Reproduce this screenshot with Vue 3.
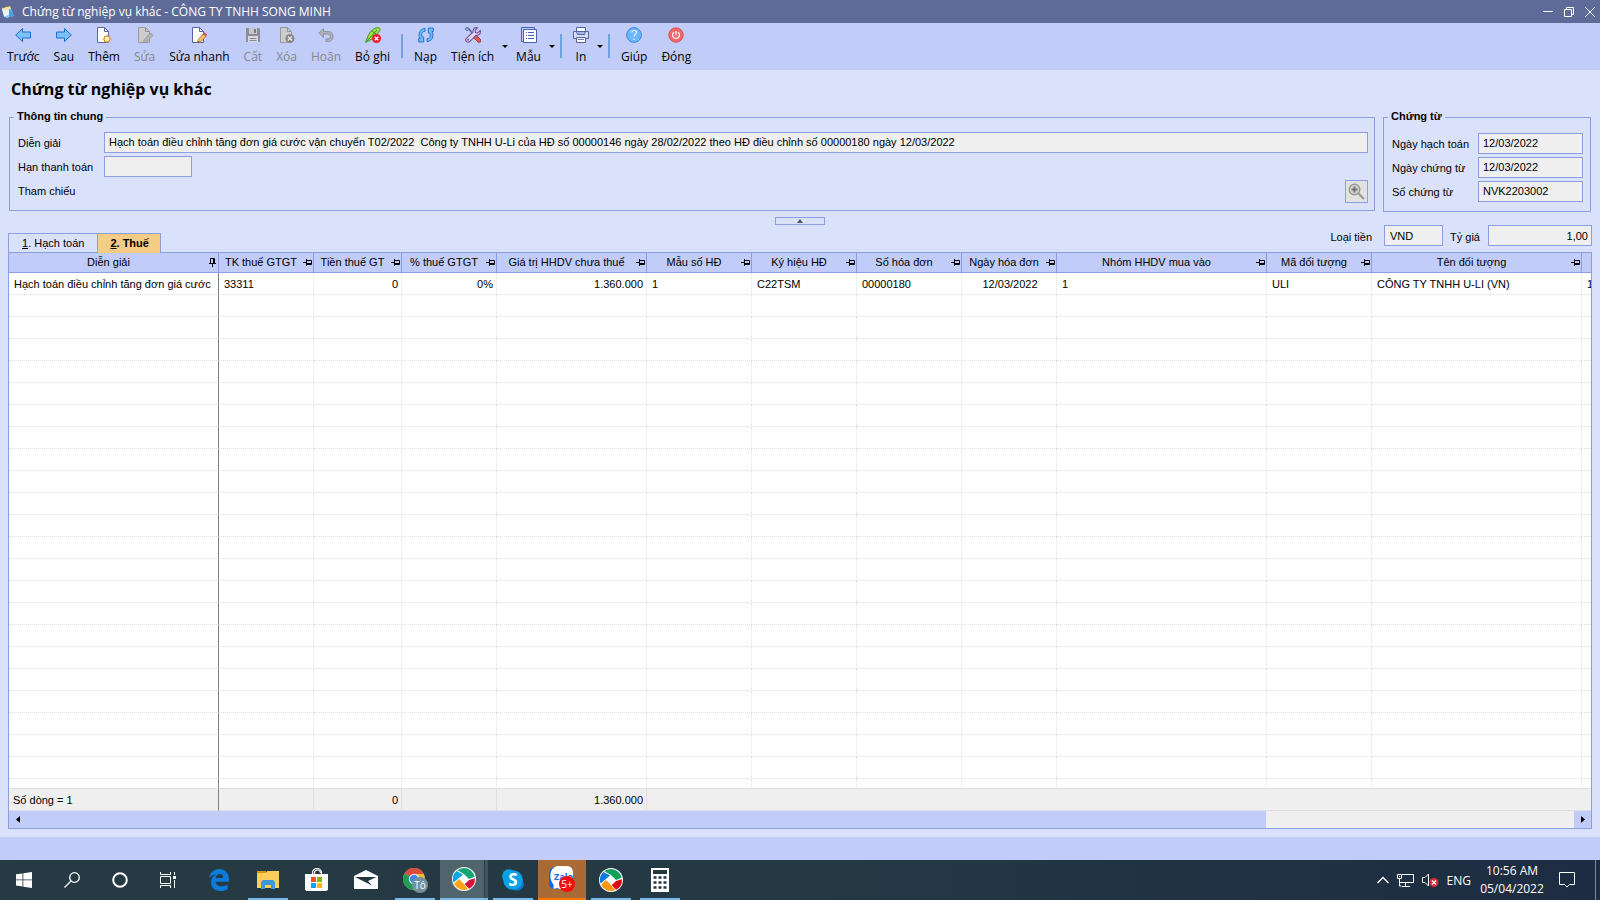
<script setup>
import { ref } from 'vue'

const tools = [
  { icon: 'prev', label: 'Trước' },
  { icon: 'next', label: 'Sau' },
  { icon: 'add', label: 'Thêm' },
  { icon: 'edit', label: 'Sửa', off: true },
  { icon: 'quick', label: 'Sửa nhanh' },
  { icon: 'save', label: 'Cất', off: true },
  { icon: 'del', label: 'Xóa', off: true },
  { icon: 'undo', label: 'Hoãn', off: true },
  { icon: 'unpost', label: 'Bỏ ghi', sep: true },
  { icon: 'reload', label: 'Nạp' },
  { icon: 'util', label: 'Tiện ích', menu: true },
  { icon: 'form', label: 'Mẫu', menu: true, sep: true },
  { icon: 'print', label: 'In', menu: true, sep: true },
  { icon: 'help', label: 'Giúp' },
  { icon: 'close', label: 'Đóng' }
]

const columns = [
  { title: 'Diễn giải', width: 210, value: 'Hạch toán điều chỉnh tăng đơn giá cước', pinned: true },
  { title: 'TK thuế GTGT', width: 95, value: '33311' },
  { title: 'Tiền thuế GT', width: 88, value: '0', align: 'right', total: '0' },
  { title: '% thuế GTGT', width: 95, value: '0%', align: 'right' },
  { title: 'Giá trị HHDV chưa thuế', width: 150, value: '1.360.000', align: 'right', total: '1.360.000' },
  { title: 'Mẫu số HĐ', width: 105, value: '1' },
  { title: 'Ký hiệu HĐ', width: 105, value: 'C22TSM' },
  { title: 'Số hóa đơn', width: 105, value: '00000180' },
  { title: 'Ngày hóa đơn', width: 95, value: '12/03/2022', align: 'center' },
  { title: 'Nhóm HHDV mua vào', width: 210, value: '1' },
  { title: 'Mã đối tượng', width: 105, value: 'ULI' },
  { title: 'Tên đối tượng', width: 210, value: 'CÔNG TY TNHH U-LI (VN)' },
  { title: '', width: 0, value: '1' }
]

const voucher = [
  { id: 'posted', label: 'Ngày hạch toán', value: '12/03/2022' },
  { id: 'dated', label: 'Ngày chứng từ', value: '12/03/2022' },
  { id: 'number', label: 'Số chứng từ', value: 'NVK2203002' }
]

const description = ref('Hạch toán điều chỉnh tăng đơn giá cước vận chuyển T02/2022  Công ty TNHH U-Li của HĐ số 00000146 ngày 28/02/2022 theo HĐ điều chỉnh số 00000180 ngày 12/03/2022')
const due = ref('')
const currency = ref('VND')
const rate = ref('1,00')
const emptyRows = 23
</script>

<template>
  <div class="screen">
    <header class="titlebar">
      <svg class="app-icon" width="14" height="14" viewBox="0 0 14 14">
        <path d="M1 4 9 2 13 11 5 13z" fill="#8fd0f5" />
        <path d="M1 4 7 2 9 9 3 12z" fill="#e9f6ff" />
        <path d="M8 3 13 11 8 12z" fill="#3f9fe0" />
        <path d="M1 3 9 1 10 4 2 5z" fill="#f2df9a" />
        <path d="M3 1v2M7 0v2" stroke="#6d5a35" />
      </svg>
      <span class="caption">Chứng từ nghiệp vụ khác - CÔNG TY TNHH SONG MINH</span>
      <button class="win" aria-label="Minimize"><svg width="12" height="12" viewBox="0 0 12 12"><path d="M1 5.500h10" stroke="#fff" /></svg></button>
      <button class="win" aria-label="Restore"><svg width="12" height="12" viewBox="0 0 12 12" fill="none" stroke="#fff"><path d="M1.500 3.500h7v7h-7zM3.500 3V1.500h7v7H9" /></svg></button>
      <button class="win" aria-label="Close"><svg width="12" height="12" viewBox="0 0 12 12"><path d="M1 1l10 10M11 1 1 11" stroke="#fff" /></svg></button>
    </header>

    <nav class="toolbar">
      <template v-for="t in tools" :key="t.icon">
        <button class="tool" :class="{ off: t.off }" :disabled="t.off">
          <svg width="16" height="16" viewBox="0 0 16 16" fill="none">
            <path v-if="t.icon === 'prev'" d="M.7 8 7.500 1.500V5h8v6h-8v3.500z" fill="#7cc0fb" stroke="#1a6fd0" />
            <path v-else-if="t.icon === 'next'" d="M15.300 8 8.500 1.500V5h-8v6h8v3.500z" fill="#7cc0fb" stroke="#1a6fd0" />
            <g v-else-if="t.icon === 'add'">
              <path d="M1.500.5h7l4 4v11h-11z" fill="#fff" stroke="#5a68a8" /><path d="M8.500.5v4h4" stroke="#5a68a8" />
              <path d="M11 7.500v9M6.500 12h9M8 9l6 6M14 9l-6 6" stroke="#dba13a" /><circle cx="11" cy="12" r="3" fill="#fff0a8" stroke="#cf922c" />
            </g>
            <g v-else-if="t.icon === 'edit'">
              <path d="M1.500.5h7l4 4v11h-11z" fill="#ccc" stroke="#9a9ba0" /><path d="M8.500.5v4h4" stroke="#929398" />
              <path d="M13.500 6 16 8.500 9.500 15 6.500 16 7 13z" fill="#b5b5b8" stroke="#8c8c92" stroke-width=".8" />
            </g>
            <g v-else-if="t.icon === 'quick'">
              <path d="M1.500.5h7l4 4v11h-11z" fill="#fff" stroke="#5265ad" /><path d="M8.500.5v4h4" stroke="#5265ad" />
              <path d="M12 7 15 9.500 9.500 15 6.500 16 7 13z" fill="#f1c173" stroke="#a56a2c" stroke-width=".8" /><path d="M13 6l2.500 2.500" stroke="#d65454" stroke-width="2" /><path d="M6.500 16l1-2 1 1z" fill="#333" />
            </g>
            <g v-else-if="t.icon === 'save'">
              <path d="M1 1h13l1 1v13H1z" fill="#8b8e98" /><path d="M4 1h8v6H4z" fill="#c6c8ce" /><path d="M9 2h2v4H9z" fill="#777b85" /><path d="M3 9h10v6H3z" fill="#d9dbe0" /><path d="M4.500 11.500h7M4.500 13.500h7" stroke="#868993" />
            </g>
            <g v-else-if="t.icon === 'del'">
              <path d="M1.500.5h7l4 4v11h-11z" fill="#ccc" stroke="#97989e" /><path d="M8.500.5v4h4" stroke="#929398" />
              <circle cx="11" cy="11.500" r="4.500" fill="#85868c" /><path d="M9 9.500l4 4M13 9.500l-4 4" stroke="#e5e5e8" stroke-width="1.500" />
            </g>
            <path v-else-if="t.icon === 'undo'" d="M.8 6 5.500 1.500V4.500h5a4.600 5 0 0 1 0 10H8v-2.500h2a2.500 2.500 0 0 0 0-5H5.500v3.500z" fill="#adb0bc" stroke="#8a8d9c" stroke-width=".9" />
            <g v-else-if="t.icon === 'unpost'">
              <path d="M.5 15.500 3 9C5 4 9 1 12.500.7c3 0 3.500 1.800 1.500 4L7 12z" fill="#9de053" stroke="#3d9720" /><path d="M2 14 12 3M7 4l4 3" stroke="#3d9720" />
              <circle cx="11.500" cy="11.500" r="4.500" fill="#ed1c24" /><path d="M9.700 9.700l3.600 3.600M13.300 9.700l-3.600 3.600" stroke="#fff" stroke-width="1.400" />
            </g>
            <g v-else-if="t.icon === 'reload'" fill="#70bafa" stroke="#1c6dcb" stroke-width=".9">
              <path d="M7 1.500C2 1.500-.5 7 2 11.500H.7v3.500h5v-5L4.500 10C2.700 7.500 4 4.500 7 4.200z" />
              <path d="M9 14.500c5 0 7.500-5.500 5-10h1.300V1h-5v5l1.200 0c1.800 2.500.5 5.500-2.500 5.800z" />
            </g>
            <g v-else-if="t.icon === 'util'">
              <path d="M1 1l2.500.5L9 8" stroke="#53659f" stroke-width="1.500" /><circle cx="2" cy="2" r="1.500" fill="#a9b9e4" stroke="#53659f" stroke-width=".8" />
              <path d="M9 9l2-1 5 5c.5 1.500-1 3-2.500 2.500L9 11z" fill="#e05a4c" stroke="#9a3434" stroke-width=".9" />
              <path d="M15.300 3.500 12.500 6 10.500 5.500 10 3.500 12.500.8C10 0 7.500 2 8 5L1.200 11.500c-1.500 2 1 4.800 3.300 3.300L11 8.300c3 .5 5-2 4.300-4.800z" fill="#ded5ef" stroke="#76519f" stroke-width="1.100" /><circle cx="3.200" cy="12.800" r="1" fill="#76519f" />
            </g>
            <g v-else-if="t.icon === 'form'">
              <path d="M.5 14.500V.5h13v2M.5 14.500h2" stroke="#4762b3" /><path d="M2.500 2.500h13v13h-13z" fill="#fff" stroke="#4762b3" />
              <path d="M5 5.500h1M7 5.500h6M5 8.500h1M7 8.500h6M5 11.500h1M7 11.500h6" stroke="#4762b3" />
            </g>
            <g v-else-if="t.icon === 'print'">
              <path d="M3.500 4.500v-4h9v4" fill="#fff" stroke="#56669b" /><path d="M.5 4.500h15v7H.5z" fill="#d3def9" stroke="#56669b" /><path d="M3.500 4.500h9l-1 3h-7z" fill="#a5b8e5" stroke="#56669b" /><path d="M3.500 10.500h9v5h-9z" fill="#fff" stroke="#56669b" /><path d="M5 12.500h6" stroke="#7180b0" />
            </g>
            <g v-else-if="t.icon === 'help'">
              <circle cx="8" cy="8" r="7.400" fill="#6cb5ff" stroke="#3789dc" /><path d="M5.800 5.500c.2-2.800 4.700-2.500 4.600 0 0 1.700-2.300 2-2.300 4M8 11.500v1.500" stroke="#f1f8ff" stroke-width="1.200" />
            </g>
            <g v-else>
              <circle cx="8" cy="8" r="7.200" fill="#f46868" stroke="#d74e50" /><path d="M6 5.300a3.400 3.400 0 1 0 4 0M8 4v4" stroke="#fff" stroke-width="1.200" />
            </g>
          </svg>
          <span>{{ t.label }}</span>
        </button>
        <button v-if="t.menu" class="caret" :aria-label="t.label + ' menu'"><svg width="6" height="3" viewBox="0 0 6 3"><path d="M0 0h6L3 3z" /></svg></button>
        <i v-if="t.sep" class="sep"></i>
      </template>
    </nav>

    <main class="page">
      <h1>Chứng từ nghiệp vụ khác</h1>

      <div class="groups">
        <fieldset class="general">
          <legend>Thông tin chung</legend>
          <div class="line"><label for="desc">Diễn giải</label><input id="desc" v-model="description" class="grow" readonly></div>
          <div class="line"><label for="due">Hạn thanh toán</label><input id="due" v-model="due" class="short" readonly></div>
          <div class="line">
            <span class="grow">Tham chiếu</span>
            <button class="lookup" aria-label="Chọn tham chiếu">
              <svg width="17" height="17" viewBox="0 0 17 17" fill="none"><circle cx="6.500" cy="6.500" r="5.300" fill="#d2d2d2" stroke="#999" stroke-width="1.400" /><path d="M6.500 3.500v6M3.500 6.500h6" stroke="#777" stroke-width="2" /><path d="M10.500 10.500l5.500 5.500" stroke="#999" stroke-width="2.200" /></svg>
            </button>
          </div>
        </fieldset>
        <fieldset class="voucher">
          <legend>Chứng từ</legend>
          <div v-for="v in voucher" :key="v.id" class="line"><label :for="v.id">{{ v.label }}</label><input :id="v.id" :value="v.value" class="grow" readonly></div>
        </fieldset>
      </div>

      <button class="fold" aria-label="Thu gọn"><svg width="6" height="4" viewBox="0 0 6 4"><path d="M0 4h6L3 0z" fill="#555" /></svg></button>

      <div class="strip">
        <div class="tabs" role="tablist">
          <button class="tab" role="tab" aria-selected="false"><u>1</u>. Hạch toán</button>
          <button class="tab on" role="tab" aria-selected="true"><u>2</u>. Thuế</button>
        </div>
        <div class="money">
          <label for="cur">Loại tiền</label><input id="cur" v-model="currency" class="cur" readonly>
          <label for="rate" class="rate-label">Tỷ giá</label><input id="rate" v-model="rate" class="rate" readonly>
        </div>
      </div>

      <section class="grid">
        <div class="rows">
          <table>
            <colgroup><col v-for="(c, i) in columns" :key="i" :style="c.width ? { width: c.width + 'px' } : null"></colgroup>
            <thead>
              <tr>
                <th v-for="(c, i) in columns" :key="i">
                  <div v-if="c.title" class="head">
                    <span>{{ c.title }}</span>
                    <svg v-if="c.pinned" width="9" height="9" viewBox="0 0 9 9" fill="none" stroke="#000"><path d="M2.500 5V.5h4V5M5.500 1v4M1 5.500h7M4.500 6v3" /></svg>
                    <svg v-else width="9" height="9" viewBox="0 0 9 9" fill="none" stroke="#000"><path d="M0 4.500h3M3.500 1v7M4 2.500h4.500v4H4M4 5.500h4" /></svg>
                  </div>
                </th>
              </tr>
            </thead>
            <tbody>
              <tr><td v-for="(c, i) in columns" :key="i" :class="c.align">{{ c.value }}</td></tr>
              <tr v-for="n in emptyRows" :key="n"><td v-for="(c, i) in columns" :key="i"></td></tr>
            </tbody>
          </table>
        </div>
        <table class="totals">
          <colgroup><col v-for="(c, i) in columns" :key="i" :style="c.width ? { width: c.width + 'px' } : null"></colgroup>
          <tbody><tr><td v-for="(c, i) in columns" :key="i" :class="c.align">{{ i ? c.total : 'Số dòng = 1' }}</td></tr></tbody>
        </table>
        <div class="hscroll">
          <button class="arrow" aria-label="Cuộn trái"><svg width="4" height="7" viewBox="0 0 4 7"><path d="M4 0v7L0 3.500z" /></svg></button>
          <div class="track"><div class="thumb"></div></div>
          <button class="arrow" aria-label="Cuộn phải"><svg width="4" height="7" viewBox="0 0 4 7"><path d="M0 0v7l4-3.500z" /></svg></button>
        </div>
      </section>
    </main>

    <div class="status"></div>

    <footer class="taskbar">
      <button class="sys" aria-label="Start"><svg width="16" height="16" viewBox="0 0 16 16" fill="#fff"><path d="M0 2.300 6.500 1.400V7.500H0zM7.300 1.300 16 0v7.500H7.300zM0 8.300h6.500v6.200L0 13.600zM7.300 8.300H16V16l-8.700-1.300z" /></svg></button>
      <button class="sys" aria-label="Search"><svg width="16" height="16" viewBox="0 0 16 16" fill="none" stroke="#fff" stroke-width="1.300"><circle cx="10.500" cy="5.500" r="4.800" /><path d="M7 9 .5 15.500" /></svg></button>
      <button class="sys" aria-label="Cortana"><svg width="16" height="16" viewBox="0 0 16 16" fill="none" stroke="#fff" stroke-width="2"><circle cx="8" cy="8" r="6.800" /></svg></button>
      <button class="sys" aria-label="Task view"><svg width="16" height="16" viewBox="0 0 16 16" fill="none" stroke="#fff"><path d="M.5 0v2.500h10V0M.5 16v-2.500h10V16M.5 4.500h10v7H.5zM14.500 0v3M14.500 8v8" /><path d="M13 4h3v3h-3z" fill="#fff" stroke="none" /></svg></button>

      <div class="apps">
        <button class="app" aria-label="Edge"><svg width="22" height="24" viewBox="0 0 22 24"><path d="M1 10.500C2 4.500 6 1 11.300 1 17.500 1 21 5.500 21 11v2.700H7.600c.2 3 2.700 4.500 6 4.500 2.300 0 4.300-.6 6-1.600v4.600C17.600 22.500 15 23 12.300 23 6.800 23 3 19.700 3 14.500c0-3.800 2-6.500 5-8-3.500.3-5.500 1.800-7 4zM7.700 10h7.500c0-2.400-1-4-3.500-4-2.200 0-3.700 1.700-4 4z" fill="#0b7bdc" /></svg></button>
        <button class="app open" aria-label="File Explorer"><svg width="22" height="20" viewBox="0 0 22 20"><path d="M0 1h9l1 2H0z" fill="#e59c13" /><path d="M0 3h9l1.500-2H22v17H0z" fill="#fbcf5a" /><path d="M0 1h8v2H0z" fill="#dd950e" /><path d="M4 19v-7l2-2h10l2 2v7h-4v-4H8v4z" fill="#3a97dd" /></svg></button>
        <button class="app" aria-label="Store"><svg width="24" height="24" viewBox="0 0 24 24"><path d="M7.500 7V4.500a4.500 4 0 0 1 9 0V7M9.500 7V5a3 3 0 0 1 6 0" fill="none" stroke="#fff" stroke-width="1.200" /><path d="M0 6h23v15.500l-1.500 1.500H1.500L0 21.500z" fill="#fff" /><path d="M6 9h5v5H6z" fill="#f25022" /><path d="M12 9h5v5h-5z" fill="#7fba00" /><path d="M6 15h5v5H6z" fill="#00a4ef" /><path d="M12 15h5v5h-5z" fill="#ffb900" /></svg></button>
        <button class="app" aria-label="Mail"><svg width="24" height="20" viewBox="0 0 24 20"><path d="M0 6 12 0l12 6v13H0z" fill="#fff" /><path d="M1 7h21.500L14 11l4 4.500z" fill="#24373f" /></svg></button>
        <button class="app open" aria-label="Chrome">
          <svg width="26" height="26" viewBox="0 0 26 26"><circle cx="12" cy="12" r="11" fill="#e8bd43" /><path d="M12 12 2.500 6.500A11 11 0 0 1 21.800 7H12z" fill="#da4c3e" /><path d="M12 12 2.500 6.500A11 11 0 0 0 11 23l5-9z" fill="#1e9d5b" /><circle cx="12" cy="12" r="5.200" fill="#f1f1f1" /><circle cx="12" cy="12" r="4.200" fill="#4386f0" /><circle cx="18" cy="18" r="8" fill="#73909d" /><text x="18" y="22" fill="#fff" font-size="10" text-anchor="middle">Tô</text></svg>
        </button>
        <button class="app current" aria-label="AMIS">
          <svg width="24" height="24" viewBox="0 0 24 24"><circle cx="12" cy="12" r="12" fill="#fff" /><path d="M5.300 3.300A11 11 0 0 1 22.700 9.800L17 12 12 7z" fill="#12a573" /><path d="M22.900 11.200A11 11 0 0 1 17 21.800L12.700 17.300 17 13z" fill="#d3163c" /><path d="M16 22.300A11 11 0 0 1 2 16.700L7 12l5 5z" fill="#fba61a" /><path d="M1.500 15.600A11 11 0 0 1 4.500 4L11 7.500 7 11z" fill="#08a5e9" /></svg>
        </button>
        <button class="app open" aria-label="Skype"><svg width="22" height="22" viewBox="0 0 22 22"><circle cx="7" cy="7" r="6.800" fill="#0aa4e8" /><circle cx="15" cy="15" r="6.800" fill="#0a78d2" /><circle cx="11" cy="11" r="9.800" fill="#08a1e7" /><text x="11" y="17" fill="#fff" font-size="17" font-weight="bold" text-anchor="middle">S</text></svg></button>
        <button class="app alert" aria-label="Zalo"><svg width="26" height="26" viewBox="0 0 26 26"><rect width="22" height="22" y="1" rx="6" fill="#0b68f4" /><path d="M8 0h10c4 0 6 3 6 7v9c0 5-3 7-8 7-4 0-6 0-8-1-2 1-3 1-4 0 1-1 1-2 0-4C0 13 0 2 8 0z" fill="#fff" /><text x="5" y="14" fill="#1b6af0" font-size="9" font-weight="bold">Zalo</text><circle cx="18" cy="18" r="8" fill="#f60b13" /><text x="18" y="22" fill="#fff" font-size="10" text-anchor="middle">5+</text></svg></button>
        <button class="app open" aria-label="MISA">
          <svg width="24" height="24" viewBox="0 0 24 24"><circle cx="12" cy="12" r="12" fill="#fff" /><path d="M5.300 3.300A11 11 0 0 1 22.700 9.800L17 12 12 7z" fill="#12a05c" /><path d="M22.900 11.200A11 11 0 0 1 17 21.800L12.700 17.300 17 13z" fill="#dc0914" /><path d="M16 22.300A11 11 0 0 1 2 16.700L7 12l5 5z" fill="#ff9508" /><path d="M1.500 15.600A11 11 0 0 1 4.500 4L11 7.500 7 11z" fill="#0c7bd8" /></svg>
        </button>
        <button class="app open" aria-label="Calculator"><svg width="18" height="24" viewBox="0 0 18 24"><path d="M0 0h18v24H0z" fill="#fff" /><path d="M2 2h14v4H2z" fill="#24373f" /><path d="M2.500 9.500h3M7.500 9.500h3M12.500 9.500h3M2.500 14.500h3M7.500 14.500h3M12.500 14.500h3M2.500 19.500h3M7.500 19.500h3M12.500 19.500h3" stroke="#24373f" stroke-width="2.500" /></svg></button>
      </div>

      <div class="tray">
        <button aria-label="Show hidden icons"><svg width="12" height="8" viewBox="0 0 12 8" fill="none" stroke="#fff" stroke-width="1.300"><path d="M.5 7 6 1.500 11.500 7" /></svg></button>
        <button aria-label="Network"><svg width="17" height="14" viewBox="0 0 17 14" fill="none" stroke="#fff"><path d="M5 1.500h11.500v8H3M8.500 10v3M5 13.500h8M.5 1.500h4v4h-4zM2.500 6v7h2M2 3.500h1" /></svg></button>
        <button aria-label="Volume"><svg width="17" height="14" viewBox="0 0 17 14" fill="none"><path d="M.5 4.500v5H3l3.500 3.500V1L3 4.500z" stroke="#fff" /><circle cx="12" cy="9.500" r="4.500" fill="#de2b34" /><path d="M10 7.500l4 4M14 7.500l-4 4" stroke="#fff" stroke-width="1.300" /></svg></button>
        <button>ENG</button>
        <button class="clock"><time>10:56 AM</time><time>05/04/2022</time></button>
        <button aria-label="Notifications"><svg width="16" height="16" viewBox="0 0 16 16" fill="none" stroke="#fff"><path d="M.5.5h15v12h-5L8 15l-2.500-2.500h-5z" /></svg></button>
      </div>
      <button class="desk" aria-label="Show desktop"></button>
    </footer>
  </div>
</template>

<style>
body {
  margin: 0;
}
</style>

<style scoped>
.screen {
  --line: #8c9edf;
  --bar: #c1cdf8;
  --page: #dae1fb;
  --field: #efefef;
  --ui: "Open Sans", "Noto Sans", sans-serif;
  display: flex;
  flex-direction: column;
  height: 100vh;
  min-height: 480px;
  overflow: hidden;
  background: var(--page);
  color: #000;
  font-family: "Liberation Sans", sans-serif;
  font-size: 11px;
}

.screen * {
  box-sizing: border-box;
}

button,
input {
  margin: 0;
  padding: 0;
  border: 0;
  border-radius: 0;
  background: none;
  color: inherit;
  font: inherit;
}

button svg {
  display: block;
}

.titlebar {
  display: flex;
  align-items: center;
  flex: none;
  height: 23px;
  padding: 0 4px 0 1px;
  background: #5e6b98;
  color: #fff;
  font-family: var(--ui);
  font-size: 12px;
}

.caption {
  flex: 1;
  margin-left: 7px;
}

.win {
  display: grid;
  place-items: center;
  width: 12px;
  height: 22px;
  margin-left: 9px;
}

.toolbar {
  display: flex;
  align-items: flex-start;
  flex: none;
  height: 47px;
  background: var(--bar);
  font-family: var(--ui);
  font-size: 12px;
}

.tool {
  display: flex;
  flex-direction: column;
  align-items: center;
  height: 47px;
  padding: 4px 7px 0;
  line-height: 16px;
  white-space: nowrap;
}

.tool span {
  margin-top: 6px;
}

.off {
  color: #85868c;
}

.caret {
  height: 47px;
  width: 8px;
  padding: 0 1px;
}

.sep {
  width: 2px;
  height: 24px;
  margin: 11px 4px 0;
  background: #6fa3dc;
}

.page {
  display: flex;
  flex-direction: column;
  flex: 1;
  min-height: 0;
}

h1 {
  height: 40px;
  margin: 0;
  padding-left: 11px;
  font: bold 16px/38px var(--ui);
}

.groups {
  display: flex;
  align-items: flex-start;
  gap: 8px;
  padding: 0 9px;
}

fieldset {
  min-width: 0;
  margin: 0;
  border: 1px solid var(--line);
}

.general {
  flex: 1;
  padding: 8px 6px 6px 8px;
}

.voucher {
  width: 208px;
  padding: 9px 7px 6px 8px;
}

legend {
  margin-left: -4px;
  padding: 0 3px 2px;
  font-weight: bold;
  line-height: 12px;
}

.line {
  display: flex;
  height: 24px;
  line-height: 23px;
}

.line label {
  flex: none;
  width: 86px;
}

input {
  min-width: 0;
  height: 21px;
  padding: 0 4px;
  border: 1px solid var(--line);
  background: var(--field);
}

.grow {
  flex: 1;
}

.short {
  width: 88px;
}

.lookup {
  display: grid;
  place-items: center;
  width: 23px;
  height: 23px;
  border: 1px solid var(--line);
  background: #e2e2e2;
}

.fold {
  display: grid;
  place-items: center;
  flex: none;
  align-self: center;
  width: 50px;
  height: 8px;
  margin-top: 5px;
  border: 1px solid var(--line);
}

.strip {
  display: flex;
  justify-content: space-between;
  align-items: flex-end;
  flex: none;
  height: 27px;
  padding: 0 8px;
}

.tabs {
  display: flex;
}

.tab {
  height: 19px;
  padding: 0 13px;
  border: 1px solid var(--line);
  border-bottom: 0;
}

.on {
  z-index: 1;
  height: 20px;
  margin: 0 0 -1px -1px;
  padding: 0 11px 2px 12px;
  background: #f5cc85;
  font-weight: bold;
}

.money {
  display: flex;
  align-self: flex-start;
  line-height: 24px;
}

.cur {
  width: 59px;
  margin-left: 12px;
  padding-left: 5px;
}

.rate-label {
  width: 38px;
  margin-left: 7px;
}

.rate {
  width: 104px;
  padding-right: 3px;
  text-align: right;
}

.grid {
  display: flex;
  flex-direction: column;
  flex: 1;
  min-height: 0;
  margin: 0 8px 8px;
  border: 1px solid var(--line);
  background: #fff;
}

.rows {
  flex: 1;
  min-height: 0;
  overflow: hidden;
}

table {
  width: 100%;
  border-spacing: 0;
  table-layout: fixed;
}

th {
  height: 20px;
  padding: 0;
  border-right: 1px solid var(--line);
  border-bottom: 1px solid var(--line);
  background: var(--bar);
  font-weight: normal;
}

th:last-child {
  border-right: 0;
}

.head {
  display: flex;
  align-items: center;
  padding: 0 1px 1px 0;
}

.head span {
  flex: 1;
  overflow: hidden;
  text-align: center;
  white-space: nowrap;
}

td {
  height: 22px;
  padding: 0 3px 0 5px;
  overflow: hidden;
  border-right: 1px dotted #e0e0e0;
  border-bottom: 1px dotted #e0e0e0;
  white-space: nowrap;
}

td:first-child {
  border-right: 1px solid #808080;
}

td:last-child {
  border-right: 0;
}

.right {
  text-align: right;
}

.center {
  text-align: center;
}

.totals {
  flex: none;
  background: var(--field);
}

.totals td {
  height: 23px;
  border-top: 1px solid #dfdfdf;
  border-right-style: solid;
  border-bottom: 1px solid #dfdfdf;
}

.totals td:first-child {
  padding-left: 4px;
}

.totals td:nth-child(n+6) {
  border-right: 0;
}

.hscroll {
  display: flex;
  flex: none;
  height: 17px;
  background: var(--bar);
}

.arrow {
  display: grid;
  place-items: center;
  width: 17px;
}

.track {
  flex: 1;
  background: var(--field);
}

.thumb {
  width: 80.1%;
  height: 100%;
  background: var(--bar);
}

.status {
  flex: none;
  height: 23px;
  background: var(--bar);
}

.taskbar {
  display: flex;
  flex: none;
  height: 40px;
  background: linear-gradient(90deg, #253a42, #243944 50%, #1d2c42);
  color: #fff;
  font-family: var(--ui);
  font-size: 12px;
}

.sys,
.app {
  display: grid;
  place-items: center;
  width: 48px;
  height: 40px;
}

.apps {
  display: flex;
  gap: 1px;
  margin-left: 3px;
}

.open {
  background: linear-gradient(#76b9ed, #76b9ed) 50% 100% / 40px 2px no-repeat;
}

.current {
  border-bottom: 2px solid #76b9ed;
  background: linear-gradient(90deg, #4f646b 44px, #2c4048 44px, #2c4048 45px, #41555e 45px);
}

.alert {
  border-bottom: 2px solid #ff7500;
  background: #aa6a35;
}

.tray {
  display: flex;
  align-items: center;
  gap: 8px;
  margin-left: auto;
}

.clock {
  display: flex;
  flex-direction: column;
  align-items: center;
  width: 66px;
  margin-right: 6px;
  line-height: 18px;
}

.desk {
  width: 5px;
  margin-left: 20px;
  border-left: 1px solid #7d8794;
}
</style>
